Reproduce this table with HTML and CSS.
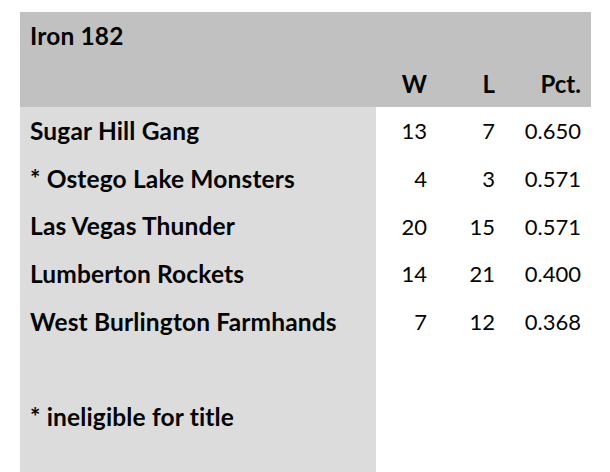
FILE: index.html
```html
<!DOCTYPE html>
<html lang="en">
<head>
<meta charset="utf-8">
<title>Iron 182</title>
<link rel="stylesheet" href="styles.css">
</head>
<body>
<div class="standings">
  <div class="cell head name">Iron 182</div>
  <div class="cell head"></div>
  <div class="cell head"></div>
  <div class="cell head"></div>

  <div class="cell head name"></div>
  <div class="cell head num">W</div>
  <div class="cell head num">L</div>
  <div class="cell head num">Pct.</div>

  <div class="cell team name">Sugar Hill Gang</div>
  <div class="cell num">13</div>
  <div class="cell num">7</div>
  <div class="cell num">0.650</div>

  <div class="cell team name">* Ostego Lake Monsters</div>
  <div class="cell num">4</div>
  <div class="cell num">3</div>
  <div class="cell num">0.571</div>

  <div class="cell team name">Las Vegas Thunder</div>
  <div class="cell num">20</div>
  <div class="cell num">15</div>
  <div class="cell num">0.571</div>

  <div class="cell team name">Lumberton Rockets</div>
  <div class="cell num">14</div>
  <div class="cell num">21</div>
  <div class="cell num">0.400</div>

  <div class="cell team name">West Burlington Farmhands</div>
  <div class="cell num">7</div>
  <div class="cell num">12</div>
  <div class="cell num">0.368</div>

  <div class="cell team name"></div>
  <div class="cell"></div>
  <div class="cell"></div>
  <div class="cell"></div>

  <div class="cell team name">* ineligible for title</div>
  <div class="cell"></div>
  <div class="cell"></div>
  <div class="cell"></div>

  <div class="cell team name"></div>
  <div class="cell"></div>
  <div class="cell"></div>
  <div class="cell"></div>
</div>
</body>
</html>
```
FILE: styles.css
```css
html, body {
  margin: 0;
  background: #ffffff;
}
body {
  padding: 12px 0 0 20px;
  font-family: Lato, "Open Sans", sans-serif;
  color: #050505;
}
.standings {
  display: grid;
  grid-template-columns: 356px 61px 68px 86px;
  grid-auto-rows: 47.6px;
  width: 571px;
}
.cell {
  display: flex;
  align-items: center;
  white-space: nowrap;
  font-size: 22px;
  line-height: 1;
  padding-top: 1px;
}
.head {
  background: #c0c1c0;
  font-weight: 700;
  font-size: 24.5px;
}
.name {
  padding-left: 10px;
  letter-spacing: 0.15px;
}
.team {
  background: #dcdcdc;
  font-weight: 700;
  font-size: 24.5px;
}
.num {
  justify-content: flex-end;
  padding-right: 10px;
}
.head.num {
  font-size: 24px;
}
```
